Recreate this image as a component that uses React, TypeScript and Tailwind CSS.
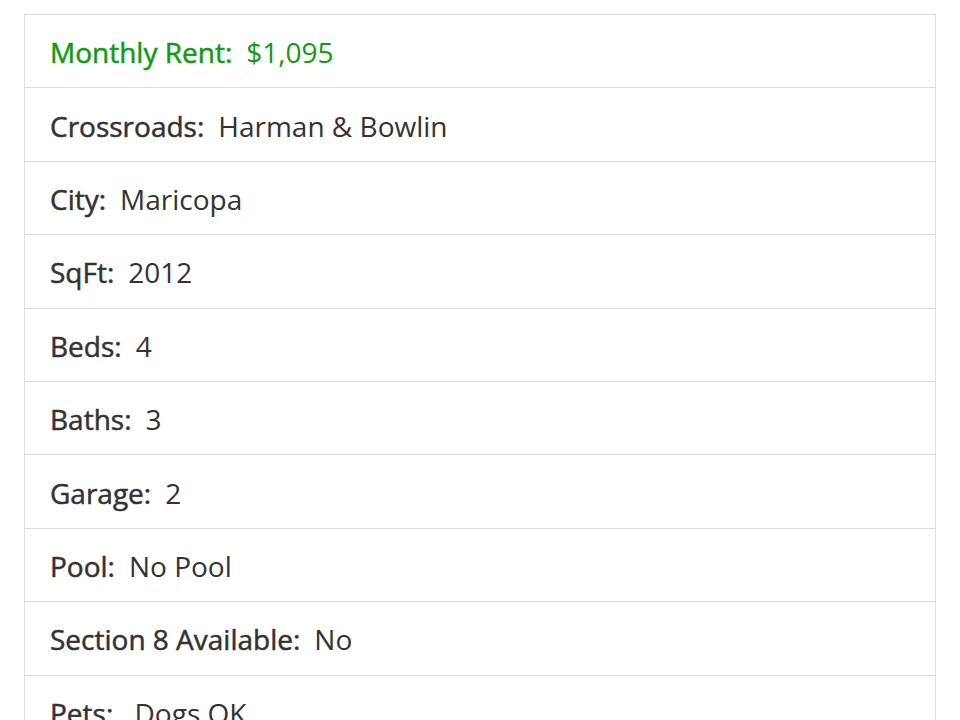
const rows: { label: string; value: string; green?: boolean }[] = [
  { label: "Monthly Rent:", value: "$1,095", green: true },
  { label: "Crossroads:", value: "Harman & Bowlin" },
  { label: "City:", value: "Maricopa" },
  { label: "SqFt:", value: "2012" },
  { label: "Beds:", value: "4" },
  { label: "Baths:", value: "3" },
  { label: "Garage:", value: "2" },
  { label: "Pool:", value: "No Pool" },
  { label: "Section 8 Available:", value: "No" },
  { label: "Pets:", value: " Dogs OK" },
];

export default function App() {
  return (
    <div className="h-[720px] w-[960px] overflow-hidden bg-white pl-6 pr-6 pt-[14px] font-['Open_Sans',sans-serif]">
      <ul className="border-x border-[#dddddd]">
        {rows.map((r) => (
          <li
            key={r.label}
            className={
              "flex h-[73.4px] items-center border-t border-[#dddddd] px-[25px] pt-[2px] text-[28px] " +
              (r.green ? "text-[#119b11]" : "text-[#333333]")
            }
          >
            <span className="[-webkit-text-stroke:0.5px_currentColor]">{r.label}</span>
            <span className="ml-[14px] whitespace-pre">{r.value}</span>
          </li>
        ))}
      </ul>
    </div>
  );
}
